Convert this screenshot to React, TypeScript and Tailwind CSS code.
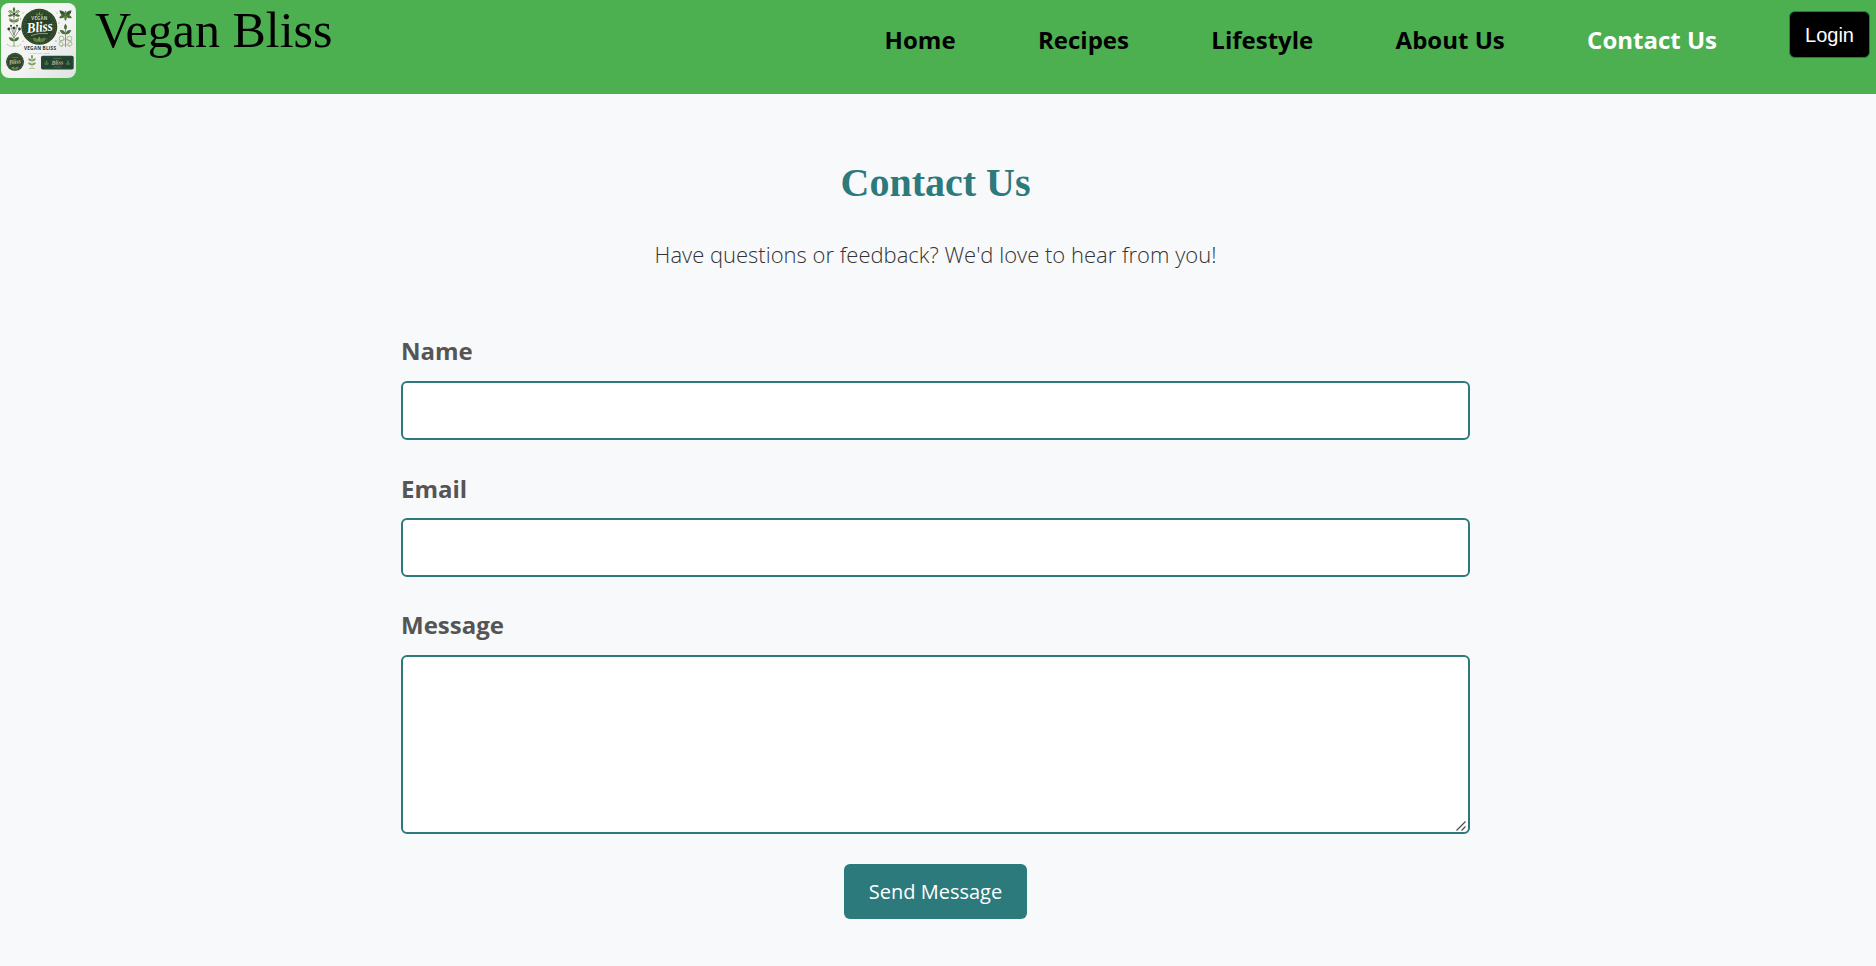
const navLinks = [
  { label: "Home", active: false },
  { label: "Recipes", active: false },
  { label: "Lifestyle", active: false },
  { label: "About Us", active: false },
  { label: "Contact Us", active: true },
];

function Leaf({ x, y, r, s = 1, fill = "#4d7039" }: { x: number; y: number; r: number; s?: number; fill?: string }) {
  return <path d="M0 0C-2.2 -1.8 -2.2 -4.6 0 -7C2.2 -4.6 2.2 -1.8 0 0Z" fill={fill} transform={`translate(${x} ${y}) rotate(${r}) scale(${s})`} />;
}

function Logo() {
  return (
    <svg viewBox="0 0 75 75" className="mt-[3px] ml-px size-[75px] shrink-0 rounded-lg" aria-label="Vegan Bliss">
      <defs>
        <linearGradient id="paper" x1="0" y1="0" x2="1" y2="1">
          <stop offset="0" stopColor="#f8f9f7" />
          <stop offset="0.6" stopColor="#f1f2f1" />
          <stop offset="1" stopColor="#dfe2e1" />
        </linearGradient>
      </defs>
      <rect width="75" height="75" fill="url(#paper)" />

      {/* flower, top left */}
      <g>
        <path d="M13 5V21M13 14L7 8M13 14L19 8M13 18L8 15M13 18L18 15" stroke="#6b8260" strokeWidth="0.7" fill="none" />
        <Leaf x={13} y={9} r={0} s={0.75} />
        <Leaf x={12} y={10} r={-55} s={0.75} fill="#8ba06f" />
        <Leaf x={14} y={10} r={55} s={0.75} fill="#8ba06f" />
        <Leaf x={12} y={12} r={-100} s={0.75} />
        <Leaf x={14} y={12} r={100} s={0.75} />
        <Leaf x={13} y={19} r={-65} s={0.8} fill="#6d8a4e" />
        <Leaf x={13} y={19} r={65} s={0.8} fill="#6d8a4e" />
        <circle cx="13" cy="11" r="1.5" fill="#304a2b" />
      </g>

      {/* berries, middle left */}
      <g>
        <path d="M13 44V27M13 35L8 27M13 35L18.5 27M13 32L10 24M13 32L16 24" stroke="#6b765f" strokeWidth="0.7" fill="none" />
        <g fill="#343f32">
          <circle cx="7.8" cy="26" r="1.4" />
          <circle cx="18.5" cy="26" r="1.4" />
          <circle cx="13" cy="25" r="1.6" />
          <circle cx="10" cy="22.8" r="1" />
          <circle cx="16" cy="22.8" r="1" />
        </g>
        <Leaf x={13} y={38} r={-55} s={0.9} />
        <Leaf x={13} y={38} r={55} s={0.9} />
        <path d="M6 41Q10 45 13 42Q16 45 20 41" stroke="#a9c38b" strokeWidth="1" strokeDasharray="2 0.8" fill="none" />
      </g>

      {/* main emblem */}
      <circle cx="38.3" cy="23.8" r="18" fill="#294227" />
      <circle cx="38.3" cy="23.8" r="16.6" fill="none" stroke="#5a7840" strokeWidth="0.7" strokeDasharray="1.4 1" />
      <circle cx="38.3" cy="23.8" r="14.6" fill="none" stroke="#48663a" strokeWidth="1" strokeDasharray="2 1.4" />
      <Leaf x={38.3} y={12.5} r={0} s={0.5} fill="#829c55" />
      <Leaf x={37.5} y={12.5} r={-60} s={0.5} fill="#6f8d48" />
      <Leaf x={39.1} y={12.5} r={60} s={0.5} fill="#6f8d48" />
      <text x="38.3" y="17" textAnchor="middle" fill="#c5d0ba" className="font-['Open_Sans'] text-[4.4px] font-bold" textLength="16">VEGAN</text>
      <text x="38.8" y="28.8" textAnchor="middle" fill="#ffffff" transform="rotate(-6 38.3 25)" className="font-['Liberation_Serif'] text-[14.5px] font-bold italic" textLength="26" lengthAdjust="spacingAndGlyphs">Bliss</text>
      <path d="M30 32.6Q38 29.5 47 30.6" stroke="#cbd6c1" strokeWidth="0.6" fill="none" />
      <Leaf x={38.3} y={39} r={0} s={0.8} fill="#7d9850" />
      <Leaf x={38} y={39} r={-58} s={1.1} fill="#5f7d40" />
      <Leaf x={38.6} y={39} r={58} s={1.1} fill="#5f7d40" />

      {/* specks around the emblem */}
      <g fill="#8fa573">
        <circle cx="22" cy="10" r="0.6" />
        <circle cx="19.5" cy="16" r="0.7" />
        <circle cx="56" cy="10" r="0.6" />
        <circle cx="58" cy="30" r="0.7" />
        <circle cx="55" cy="38" r="0.7" />
        <circle cx="22" cy="38" r="0.6" />
        <circle cx="58" cy="20" r="0.6" />
      </g>

      {/* leaf cross, top right */}
      <Leaf x={64.5} y={13} r={-48} s={1.15} fill="#375b30" />
      <Leaf x={64.5} y={13} r={48} s={1.15} fill="#375b30" />
      <Leaf x={64.5} y={12} r={-115} s={1} fill="#466b36" />
      <Leaf x={64.5} y={12} r={115} s={1} fill="#466b36" />
      <Leaf x={64.5} y={12} r={180} s={0.85} fill="#5c7d40" />
      <Leaf x={64.5} y={12} r={0} s={0.65} fill="#5c7d40" />

      {/* sprig and curls, middle right */}
      <path d="M64.5 22V44" stroke="#5e774c" strokeWidth="0.7" />
      <Leaf x={64.5} y={27} r={0} s={0.9} />
      <Leaf x={64.5} y={31} r={-55} s={1} />
      <Leaf x={64.5} y={31} r={55} s={1} />
      <g fill="none" stroke="#9aad85" strokeWidth="0.8">
        <circle cx="60.5" cy="35.5" r="2.4" />
        <circle cx="68.5" cy="35.5" r="2.4" />
        <circle cx="60" cy="41" r="2" />
        <circle cx="69" cy="41" r="2" />
        <path d="M58 39Q64.5 34 71 39M60 44Q64.5 39 69 44" />
      </g>

      <text x="39" y="47" textAnchor="middle" fill="#263a2b" className="font-['Open_Sans'] text-[4.7px] font-bold" textLength="32">VEGAN BLISS</text>
      <text x="38.6" y="50.8" textAnchor="middle" fill="#7d8679" className="font-['Open_Sans'] text-[2.2px]" textLength="19">TAGLINE HERE</text>

      {/* round badge */}
      <circle cx="14" cy="58.8" r="9" fill="#2c452d" />
      <circle cx="14" cy="58.8" r="7.8" fill="none" stroke="#54704a" strokeWidth="0.5" />
      <text x="14" y="61" textAnchor="middle" fill="#b9c6b6" transform="rotate(-6 14 59)" className="font-['Liberation_Serif'] text-[6.6px] font-bold italic" textLength="12" lengthAdjust="spacingAndGlyphs">Bliss</text>
      <Leaf x={14} y={66} r={-60} s={0.6} fill="#6d8a58" />
      <Leaf x={14} y={66} r={60} s={0.6} fill="#6d8a58" />
      <path d="M10.5 54.4H17.5" stroke="#7f9477" strokeWidth="0.6" />

      {/* small sprig */}
      <path d="M31 52V65" stroke="#8fa475" strokeWidth="0.6" />
      <Leaf x={31} y={56} r={0} s={0.6} fill="#7d9a52" />
      <Leaf x={31} y={58} r={-60} s={0.65} fill="#7d9a52" />
      <Leaf x={31} y={58} r={60} s={0.65} fill="#7d9a52" />
      <Leaf x={31} y={62} r={-60} s={0.65} fill="#7d9a52" />
      <Leaf x={31} y={62} r={60} s={0.65} fill="#7d9a52" />
      <path d="M28 65.5H34" stroke="#9db47a" strokeWidth="0.7" />

      {/* label badge */}
      <rect x="40" y="52.7" width="32.7" height="13.8" rx="1.8" fill="#21422f" />
      <rect x="41.2" y="53.9" width="30.3" height="11.4" rx="1.2" fill="none" stroke="#315640" strokeWidth="0.4" />
      <text x="56.3" y="61.7" textAnchor="middle" fill="#abbcae" transform="rotate(-4 56 60)" className="font-['Liberation_Serif'] text-[6.4px] font-bold italic" textLength="11.5" lengthAdjust="spacingAndGlyphs">Bliss</text>
      <path d="M52.5 55.5H60.5M52.5 64H60.5" stroke="#64806a" strokeWidth="0.6" />
      <Leaf x={45.5} y={62} r={0} s={0.7} fill="#4d7045" />
      <Leaf x={45.5} y={62} r={-50} s={0.45} fill="#4d7045" />
      <Leaf x={45.5} y={62} r={50} s={0.45} fill="#4d7045" />
      <Leaf x={67} y={62} r={0} s={0.7} fill="#4d7045" />
      <Leaf x={67} y={62} r={-50} s={0.45} fill="#4d7045" />
      <Leaf x={67} y={62} r={50} s={0.45} fill="#4d7045" />
    </svg>
  );
}

const labelClass = "block text-2xl leading-9 font-bold text-[#555555]";
const fieldClass = "block w-full rounded-md border-2 border-[#2c7a7b] bg-white px-3 text-xl outline-none";

export default function App() {
  return (
    <div className="min-h-screen bg-[#f8f9fb] font-['Open_Sans',sans-serif]">
      <header className="flex h-[94px] items-start bg-[#4caf50]">
        <Logo />
        <h1 className="ml-[19px] font-['Liberation_Serif',serif] text-[50px] leading-[60px] text-black">Vegan Bliss</h1>
        <nav className="mt-[22px] ml-auto flex gap-[82.4px] text-2xl leading-9 font-bold">
          {navLinks.map((link) => (
            <a key={link.label} href="#" className={link.active ? "text-white" : "text-black"}>
              {link.label}
            </a>
          ))}
        </nav>
        <button className="mt-[11px] mr-1.5 ml-[72px] h-[47px] w-[81px] rounded-md border border-[#1b7f55] bg-black font-['Liberation_Sans',sans-serif] text-xl text-white">
          Login
        </button>
      </header>

      <main className="flex flex-col items-center pt-[59px] pr-[5px]">
        <h2 className="font-['Liberation_Serif',serif] text-[40px] leading-[60px] font-bold text-[#2c7a7b]">Contact Us</h2>
        <p className="mt-[25px] text-[22px] leading-[33px] font-light text-[#333333]">
          Have questions or feedback? We'd love to hear from you!
        </p>
        <form className="mt-[62px] flex w-[1069px] flex-col gap-[30px]">
          <div>
            <label htmlFor="name" className={`${labelClass} mb-3`}>Name</label>
            <input id="name" type="text" className={`${fieldClass} h-[59px]`} />
          </div>
          <div>
            <label htmlFor="email" className={`${labelClass} mb-[11px] pt-px`}>Email</label>
            <input id="email" type="email" className={`${fieldClass} h-[59px]`} />
          </div>
          <div className="relative">
            <label htmlFor="message" className={`${labelClass} mb-3`}>Message</label>
            <textarea id="message" className={`${fieldClass} h-[179px] resize-none`} />
            <svg viewBox="0 0 10 10" className="pointer-events-none absolute right-1 bottom-[3px] size-2.5" aria-hidden="true">
              <path d="M0.5 9.5L9.5 0.5M5.5 9.5L9.5 5.5" stroke="#4a4a4a" strokeWidth="1.2" fill="none" />
            </svg>
          </div>
          <button type="button" className="h-[55px] w-[183px] self-center rounded-md bg-[#2c7a7b] text-xl text-white">
            Send Message
          </button>
        </form>
      </main>
    </div>
  );
}
